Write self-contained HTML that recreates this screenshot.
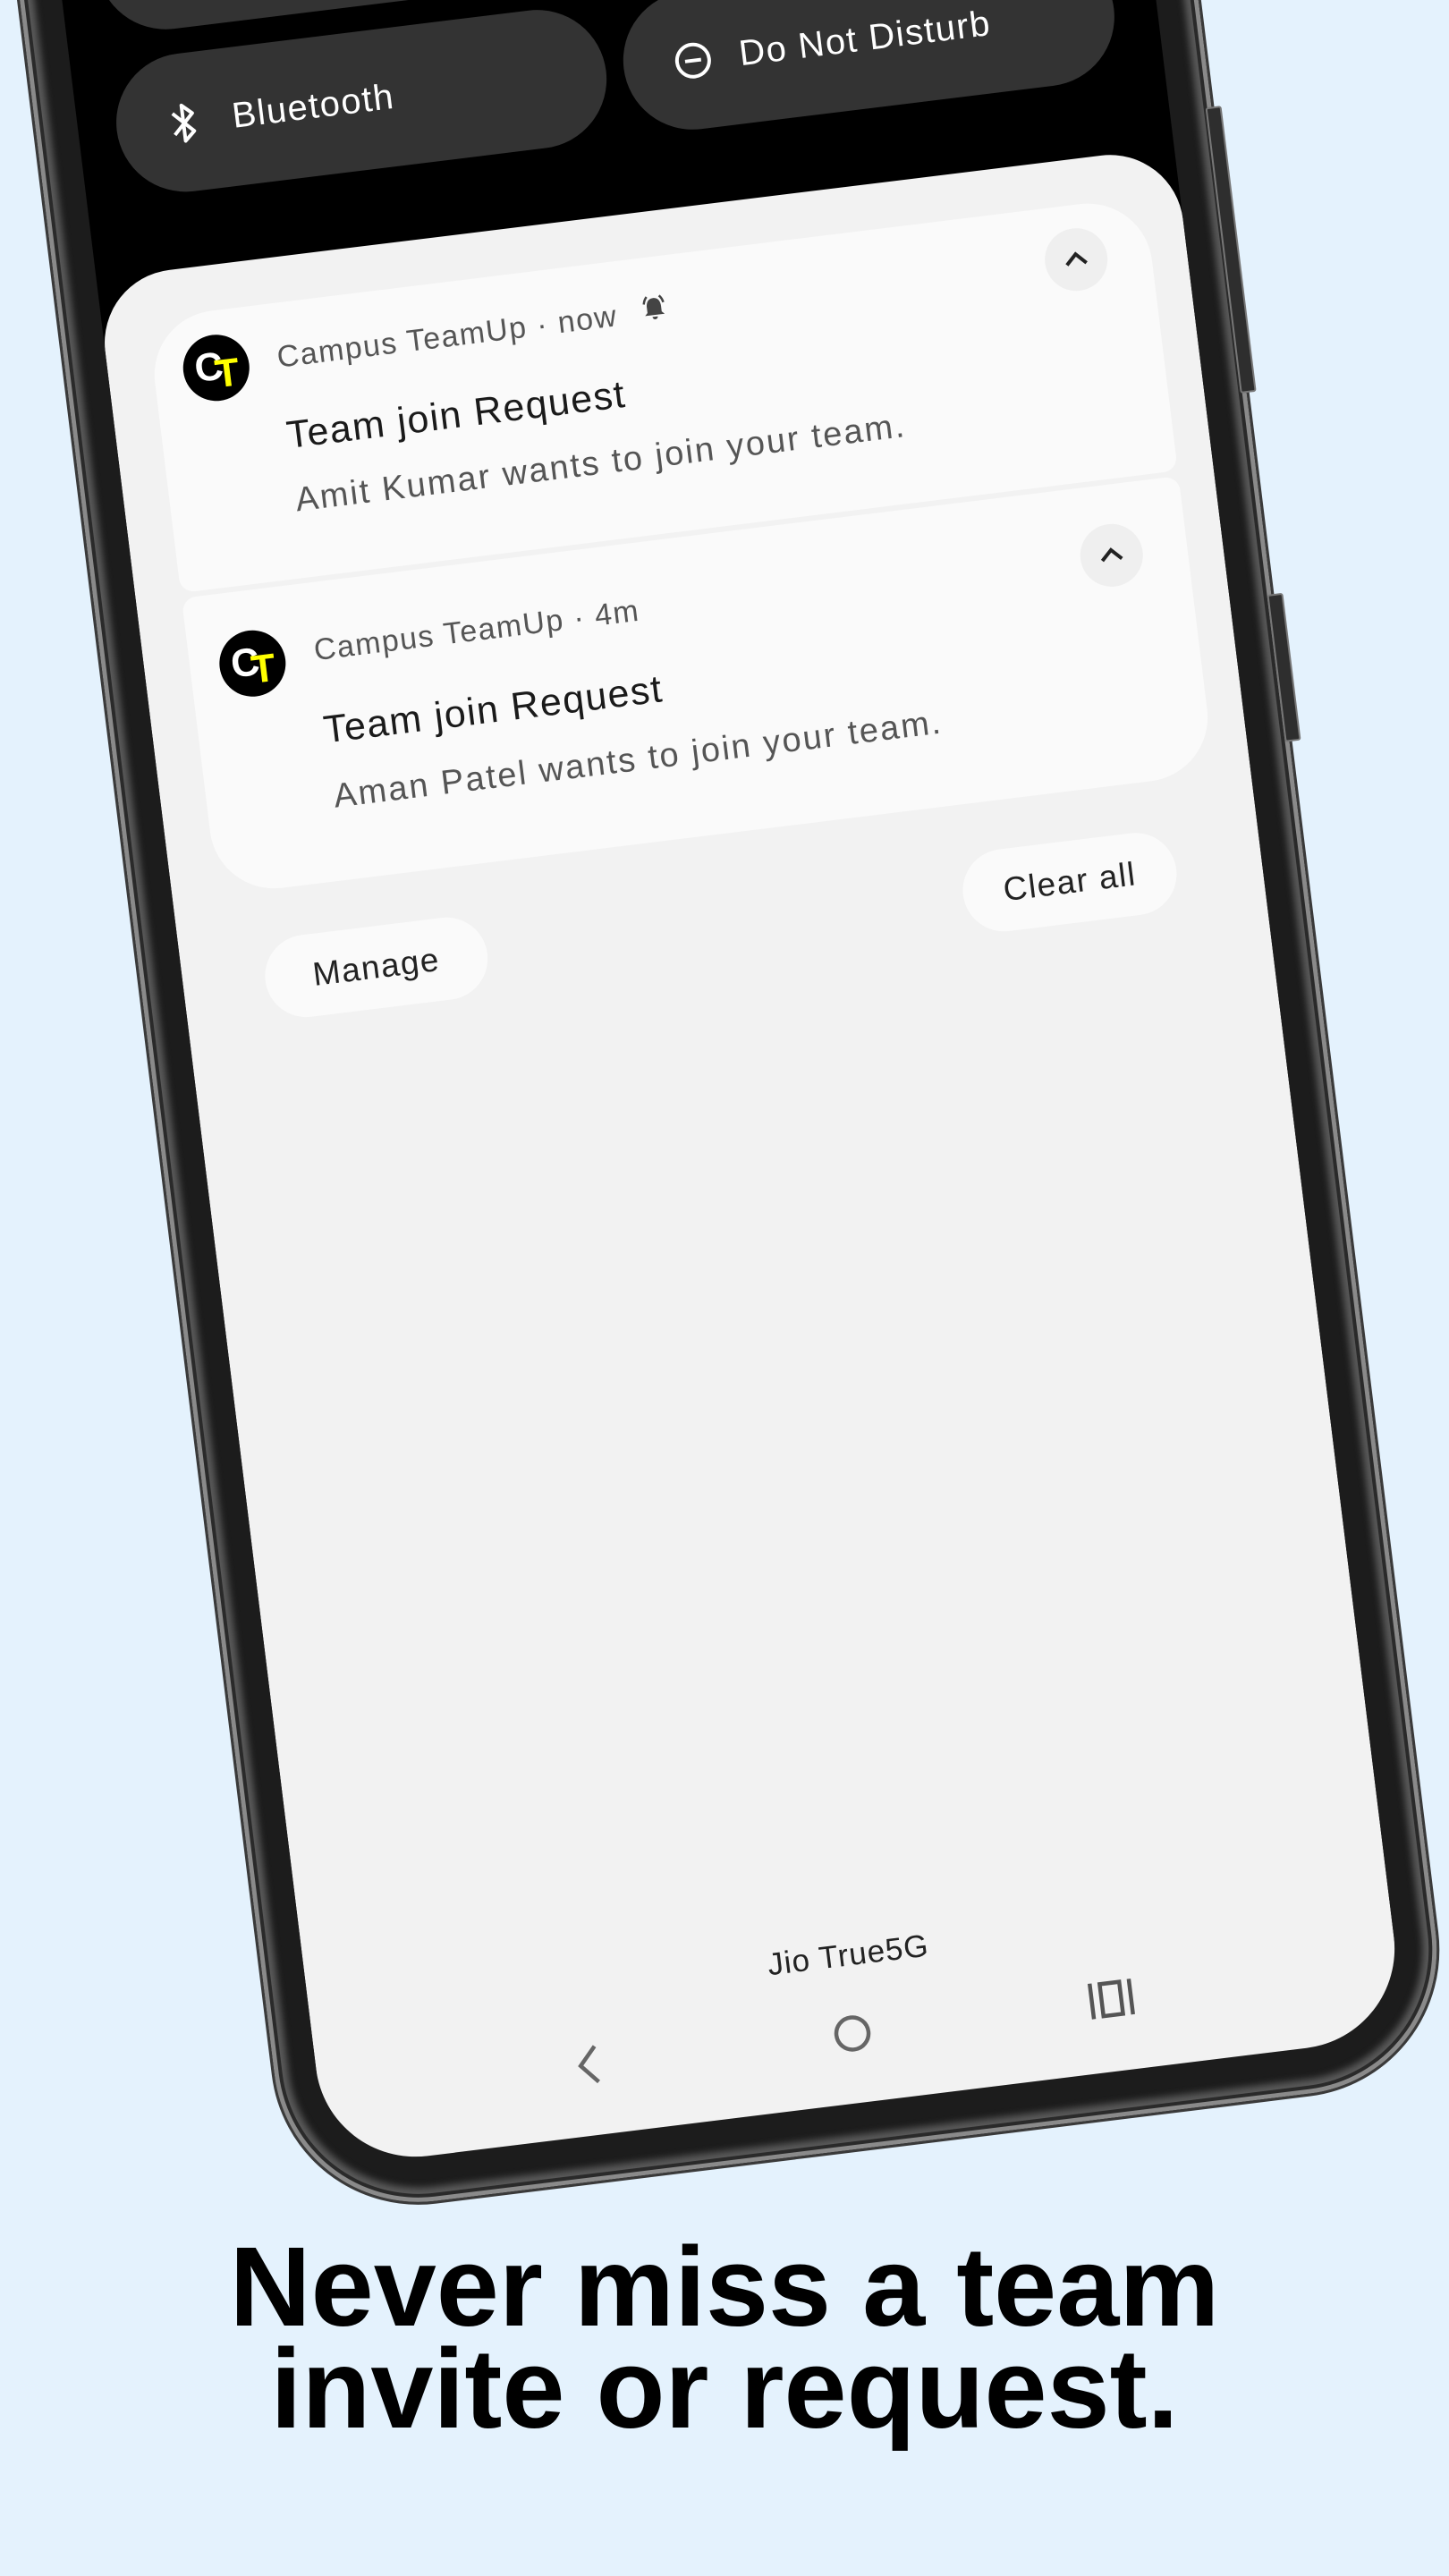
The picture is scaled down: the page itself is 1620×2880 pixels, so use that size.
<!DOCTYPE html>
<html><head><meta charset="utf-8">
<style>
html,body{margin:0;padding:0}
body{width:1620px;height:2880px;background:#e4f2fd;position:relative;overflow:hidden;font-family:"Liberation Sans",sans-serif}
#wrap{position:absolute;left:367px;top:-276px;width:1214px;height:2700px;transform-origin:0 100%;transform:rotate(-7deg)}
.frame{position:absolute;left:-50px;top:-100px;width:1314px;height:2854px;border-radius:0 0 165px 165px;background:#1c1c1c;border:3px solid #3a3a3a;box-sizing:border-box;box-shadow:inset 0 0 0 5px #8a8a8a,inset 0 0 0 9px #2a2a2a,inset 0 0 8px 16px #5a5a5a}
.btn{position:absolute;width:14px;background:#2e2e2e;border:2px solid #777;border-radius:3px}
.screen{position:absolute;left:0;top:0;width:1214px;height:2700px;background:#000;border-radius:0 0 112px 112px;overflow:hidden}
.pill{position:absolute;height:155px;background:#333;border-radius:78px;color:#fff}
.panel{position:absolute;left:0;top:572px;width:1214px;height:2200px;background:#f2f2f2;border-radius:82px 82px 0 0}
.card{position:absolute;left:51px;width:1123px;background:#fafafa}
.t{position:absolute;white-space:nowrap}
.hdr{font-size:34px;color:#555;line-height:40px;letter-spacing:1.5px}
.ttl{font-size:43px;color:#1a1a1a;line-height:48px;letter-spacing:1.5px}
.bdy{font-size:38px;color:#555;line-height:44px;letter-spacing:2.2px}
.ct{position:absolute;width:74px;height:74px;border-radius:50%;background:#000}
.ct span{position:absolute;font-size:44px;font-weight:bold}
.chev{position:absolute;width:70px;height:70px;border-radius:50%;background:#efefef}
.bbtn{position:absolute;height:92px;top:1328px;background:#fafafa;border-radius:46px;font-size:37px;color:#222;text-align:center;line-height:92px;letter-spacing:1.5px}
.cap{position:absolute;left:0;width:1620px;text-align:center;font-weight:bold;font-size:126px;color:#000;line-height:114px;font-family:"Liberation Sans",sans-serif}
</style></head><body>
<div id="wrap">
  <div class="frame"></div>
  <div class="btn" style="left:1254px;top:533px;height:318px"></div>
  <div class="btn" style="left:1256px;top:1082px;height:162px"></div>
  <div class="screen">
    <div class="pill" style="left:43px;top:150px;width:551px"></div>
    <div class="pill" style="left:614px;top:150px;width:552px"></div>
    <div class="pill" style="left:43px;top:333px;width:551px">
      <svg style="position:absolute;left:58px;top:52px" width="36" height="52" viewBox="0 0 36 52"><path d="M6 14 L28 36 L17 46 L17 6 L28 16 L6 38" fill="none" stroke="#fff" stroke-width="4" stroke-linejoin="round"/></svg>
      <div class="t" style="left:130px;top:52px;font-size:40px;line-height:50px;letter-spacing:1.5px">Bluetooth</div>
    </div>
    <div class="pill" style="left:614px;top:333px;width:552px">
      <svg style="position:absolute;left:56px;top:56px" width="44" height="44" viewBox="0 0 44 44"><circle cx="22" cy="22" r="18" fill="none" stroke="#fff" stroke-width="4"/><path d="M13 22 H31" stroke="#fff" stroke-width="4"/></svg>
      <div class="t" style="left:130px;top:52px;font-size:40px;line-height:50px;letter-spacing:1.5px">Do Not Disturb</div>
    </div>
    <div class="panel"></div>
    <div class="card" style="top:623px;height:309px;border-radius:72px 72px 16px 16px"></div>
    <div class="card" style="top:938px;height:335px;border-radius:16px 16px 72px 72px"></div>

    <div class="chev" style="left:1055px;top:649px"><svg width="70" height="70" viewBox="0 0 70 70"><path d="M24 40 L35 29 L46 40" fill="none" stroke="#222" stroke-width="4"/></svg></div>
    <div class="chev" style="left:1054px;top:982px"><svg width="70" height="70" viewBox="0 0 70 70"><path d="M24 40 L35 29 L46 40" fill="none" stroke="#222" stroke-width="4"/></svg></div>

    <div class="ct" style="left:84px;top:650px"><span style="left:13px;top:11px;color:#fff">C</span><span style="left:35px;top:20px;color:#ff0">T</span></div>
    <div class="ct" style="left:84px;top:983px"><span style="left:13px;top:11px;color:#fff">C</span><span style="left:35px;top:20px;color:#ff0">T</span></div>

    <div class="t hdr" style="left:190px;top:663px">Campus TeamUp · now <svg width="34" height="34" viewBox="0 0 34 34" style="vertical-align:-2px;margin-left:14px"><path d="M17 6 C11 6 9 11 9 16 V22 L6 25 H28 L25 22 V16 C25 11 23 6 17 6Z M14 27 H20 A3 3 0 0 1 14 27Z" fill="#444"/><path d="M6 12 Q7 7 10 4 M28 12 Q27 7 24 4" fill="none" stroke="#444" stroke-width="2.5"/></svg></div>
    <div class="t ttl" style="left:190px;top:748px">Team join Request</div>
    <div class="t bdy" style="left:191px;top:823px">Amit Kumar wants to join your team.</div>

    <div class="t hdr" style="left:191px;top:994px">Campus TeamUp · 4m</div>
    <div class="t ttl" style="left:191px;top:1080px">Team join Request</div>
    <div class="t bdy" style="left:193px;top:1157px">Aman Patel wants to join your team.</div>

    <div class="bbtn" style="left:878px;width:240px">Clear all</div>
    <div class="bbtn" style="left:92px;width:250px">Manage</div>

    <div class="t" style="left:456px;width:300px;text-align:center;top:2514px;font-size:35px;color:#222;line-height:42px;letter-spacing:1px">Jio True5G</div>
    <svg style="position:absolute;left:288px;top:2597px" width="30" height="48" viewBox="0 0 30 48"><path d="M24 4 L6 24 L24 44" fill="none" stroke="#666" stroke-width="4.5"/></svg>
    <svg style="position:absolute;left:578px;top:2600px" width="44" height="44" viewBox="0 0 44 44"><circle cx="22" cy="22" r="18" fill="none" stroke="#666" stroke-width="4.5"/></svg>
    <svg style="position:absolute;left:866px;top:2597px" width="52" height="44" viewBox="0 0 52 44"><path d="M4 2 V42 M48 2 V42" stroke="#555" stroke-width="4.5"/><rect x="15" y="4" width="22" height="36" fill="none" stroke="#555" stroke-width="4.5"/></svg>
  </div>
</div>
<div class="cap" style="top:2500px">Never miss a team</div>
<div class="cap" style="top:2614px">invite or request.</div>
</body></html>
